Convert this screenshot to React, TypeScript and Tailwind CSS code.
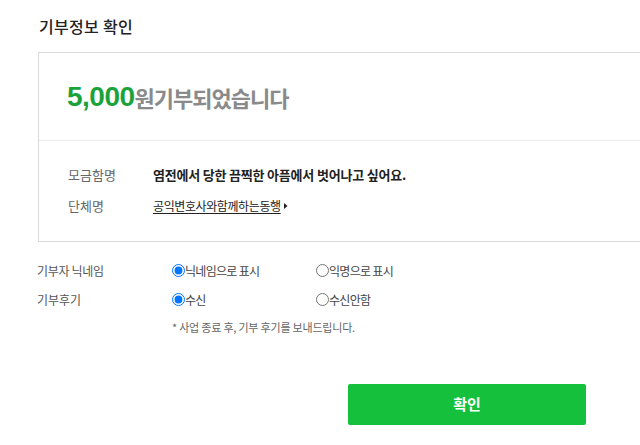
import React from 'react';

const KR = "font-['Noto_Sans_CJK_KR','Noto_Sans',sans-serif]";

function Radio({ checked, label }: { checked?: boolean; label: string }) {
  return (
    <label className="flex items-center text-[12px] text-[#444] leading-none tracking-[-0.7px]">
      <input
        type="radio"
        defaultChecked={checked}
        className="m-0 w-[13px] h-[13px] accent-[#0075ff]"
        readOnly
      />
      <span>{label}</span>
    </label>
  );
}

export default function App() {
  return (
    <div className={`${KR} w-[640px] h-[445px] overflow-hidden bg-white`}>
      <h1 className="pl-[39px] pt-[14px] h-[52px] text-[16px] font-medium text-[#222] tracking-[0.3px]">
        기부정보 확인
      </h1>

      {/* summary box */}
      <div className="ml-[38px] border border-r-0 border-[#d9d9d9]">
        <div className="h-[88px] pl-[28px] flex items-center border-b border-[#ebebeb]">
          <span className="font-['Liberation_Sans',sans-serif] font-bold text-[28px] text-[#1ba23b] tracking-[-0.5px]">
            5,000
          </span>
          <span className="text-[22px] font-bold text-[#8a8a8a] tracking-[-1px] mt-[1px]">
            원기부되었습니다
          </span>
        </div>
        <div className="h-[100px] pl-[29px] pt-[24px] flex flex-col gap-[12px] text-[13px]">
          <div className="flex items-center h-[19px]">
            <span className="w-[85px] text-[#666]">모금함명</span>
            <span className="font-bold text-[#222] tracking-[-0.2px]">
              염전에서 당한 끔찍한 아픔에서 벗어나고 싶어요.
            </span>
          </div>
          <div className="flex items-center h-[19px]">
            <span className="w-[85px] text-[#666]">단체명</span>
            <span className="text-[#222] underline underline-offset-2 tracking-[-0.4px] text-[12px]">
              공익변호사와함께하는동행
            </span>
            <svg width="6" height="8" viewBox="0 0 6 8" className="ml-[2px]">
              <path d="M1 1l3.5 3L1 7z" fill="#222" />
            </svg>
          </div>
        </div>
      </div>

      {/* options */}
      <div className="pl-[37px] pt-[14px]">
        <div className="flex items-center h-[29px]">
          <span className="w-[135px] text-[12px] text-[#555] tracking-[-0.3px]">기부자 닉네임</span>
          <div className="w-[144px]">
            <Radio checked label="닉네임으로 표시" />
          </div>
          <Radio label="익명으로 표시" />
        </div>
        <div className="flex items-center h-[29px]">
          <span className="w-[135px] text-[12px] text-[#555]">기부후기</span>
          <div className="w-[144px]">
            <Radio checked label="수신" />
          </div>
          <Radio label="수신안함" />
        </div>
        <p className="pl-[135px] text-[11px] text-[#666] leading-[26px] tracking-[-0.2px]">
          * 사업 종료 후, 기부 후기를 보내드립니다.
        </p>
      </div>

      <div className="flex pl-[348px] pt-[44px]">
        <button className="w-[238px] h-[41px] rounded-[2px] bg-[#15c13c] text-white text-[15px] font-bold">
          확인
        </button>
      </div>
    </div>
  );
}
